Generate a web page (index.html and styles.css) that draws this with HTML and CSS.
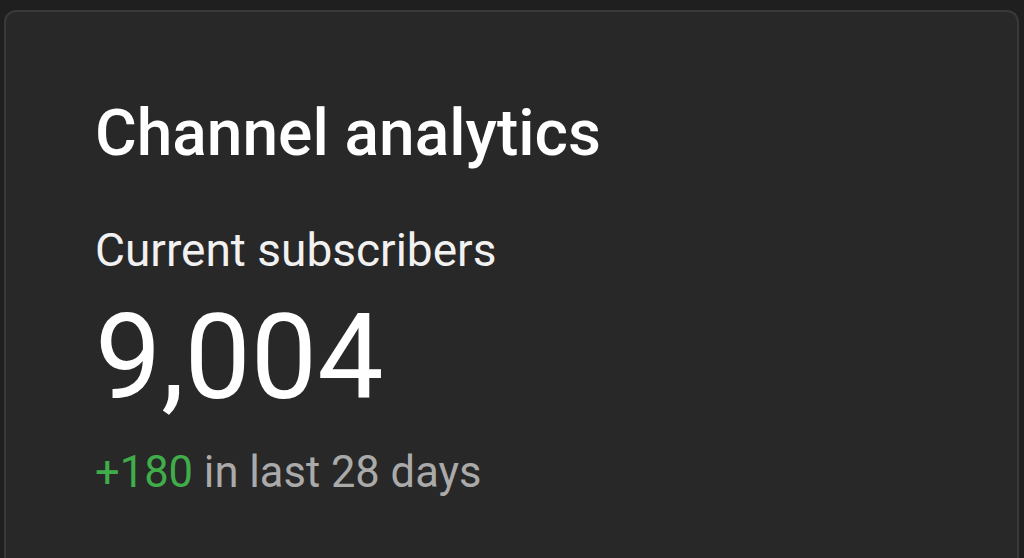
FILE: index.html
```html
<!DOCTYPE html>
<html>
<head>
<meta charset="utf-8">
<link rel="stylesheet" href="styles.css">
</head>
<body>
<div class="card">
  <h1 class="title">Channel analytics</h1>
  <div class="label">Current subscribers</div>
  <div class="value">9,004</div>
  <div class="delta"><span class="up">+180</span> in last 28 days</div>
</div>
</body>
</html>
```
FILE: styles.css
```css
html, body {
  margin: 0;
  padding: 0;
  background: #1f1f1f;
  height: 100%;
  overflow: hidden;
  font-family: Roboto, "Liberation Sans", sans-serif;
}
body {
  padding: 10px 5px 0 4px;
  box-sizing: border-box;
}
.card {
  background: #282828;
  border: 2px solid #393939;
  border-bottom: none;
  border-radius: 12px 12px 0 0;
  height: 100%;
  padding: 90px 0 0 89px;
  box-sizing: border-box;
  color: #ffffff;
}
.title {
  margin: 0;
  font-size: 64px;
  font-weight: 500;
  line-height: 64px;
}
.label {
  margin-top: 61px;
  font-size: 46px;
  line-height: 46px;
  color: #f1f1f1;
}
.value {
  margin-top: 26px;
  font-size: 118px;
  line-height: 118px;
  font-weight: 400;
}
.delta {
  margin-top: 34px;
  font-size: 43.5px;
  line-height: 44px;
  color: #aaaaaa;
}
.up {
  color: #3fae4a;
}
```
